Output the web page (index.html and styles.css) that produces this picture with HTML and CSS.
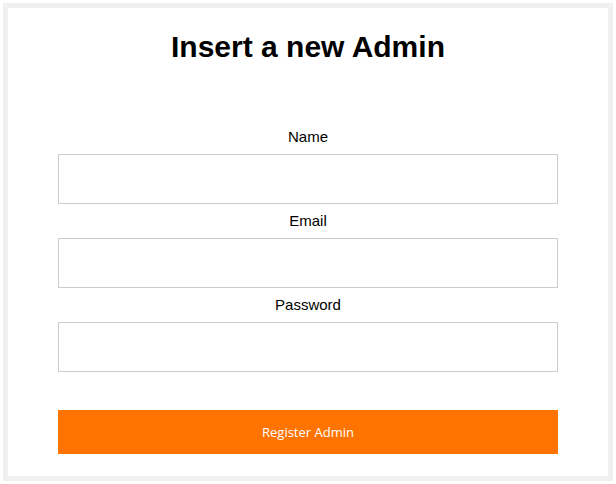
FILE: index.html
```html
<!DOCTYPE html>
<html>
<head>
<meta charset="utf-8">
<link rel="stylesheet" href="styles.css">
</head>
<body>
<div class="box">
  <h1 class="title">Insert a new Admin</h1>
  <form class="form">
    <div class="field">
      <label class="label" for="name">Name</label>
      <input class="input" id="name" type="text">
    </div>
    <div class="field">
      <label class="label" for="email">Email</label>
      <input class="input" id="email" type="email">
    </div>
    <div class="field">
      <label class="label" for="password">Password</label>
      <input class="input" id="password" type="password">
    </div>
    <button class="button" type="button">Register Admin</button>
  </form>
</div>
</body>
</html>
```
FILE: styles.css
```css
html, body {
  margin: 0;
  padding: 0;
  background: #ffffff;
}
body {
  padding: 3px;
  font-family: "Liberation Sans", Arial, sans-serif;
  color: #000;
}
.box {
  box-sizing: border-box;
  width: 610px;
  height: 478px;
  border: 5px solid #f0f0f0;
  padding-top: 20px;
}
.title {
  margin: 0;
  font-size: 30px;
  line-height: 37px;
  font-weight: bold;
  text-align: center;
}
.form {
  width: 500px;
  margin: 55px auto 0;
  display: flex;
  flex-direction: column;
}
.field {
  display: flex;
  flex-direction: column;
  margin-top: 8px;
}
.label {
  display: block;
  font-size: 15px;
  line-height: 18px;
  text-align: center;
  margin-bottom: 8px;
}
.input {
  box-sizing: border-box;
  width: 500px;
  height: 50px;
  border: 1px solid #cccccc;
  margin: 0;
  padding: 0 10px;
  background: #fff;
  outline: none;
}
.button {
  margin-top: 38px;
  height: 44px;
  width: 500px;
  border: none;
  background: #ff7300;
  color: #ffffff;
  font-family: "Open Sans", "Noto Sans", sans-serif;
  font-size: 13px;
  padding: 0;
  cursor: pointer;
}
```
